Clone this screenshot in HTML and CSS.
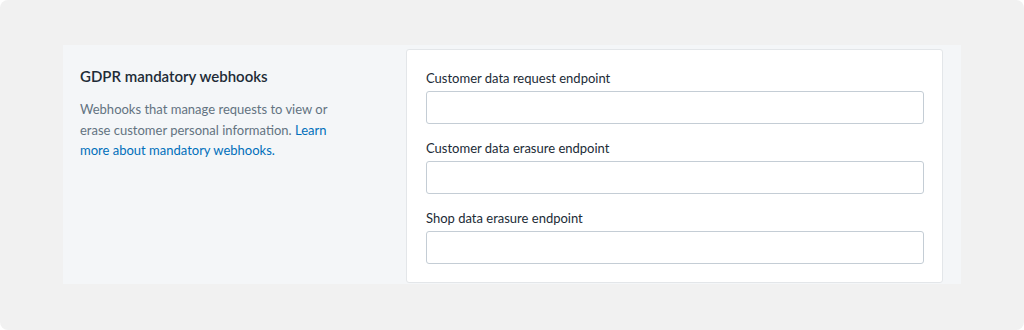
FILE: index.html
```html
<!DOCTYPE html>
<html>
<head>
    <title>App setup</title>
    <link rel="stylesheet" href="styles.css">
</head>
<body>
    <div class="frame">
        <div class="layout">
            <!-- Annotation -->
            <div class="annotation">
                <h2 class="heading">GDPR mandatory webhooks</h2>
                <p class="description">
                    Webhooks that manage requests to view or erase customer personal information.
                    <a href="#">Learn more about mandatory webhooks.</a>
                </p>
            </div>

            <!-- Card with fields -->
            <div class="card">
                <div class="field">
                    <label for="requestEndpoint">Customer data request endpoint</label>
                    <input class="input" type="text" id="requestEndpoint">
                </div>
                <div class="field">
                    <label for="erasureEndpoint">Customer data erasure endpoint</label>
                    <input class="input" type="text" id="erasureEndpoint">
                </div>
                <div class="field">
                    <label for="shopErasureEndpoint">Shop data erasure endpoint</label>
                    <input class="input" type="text" id="shopErasureEndpoint">
                </div>
            </div>
        </div>
    </div>
</body>
</html>
```
FILE: styles.css
```css
body {
    margin: 0;
    padding: 0;
    background-color: #ffffff;
    font-family: Lato, "Noto Sans", sans-serif;
    font-size: 13px;
    color: #212b36;
}

.frame {
    height: 330px;
    box-sizing: border-box;
    padding: 45px 63px 0 63px;
    background-color: #f1f1f1;
    border-radius: 8px;
}

.layout {
    display: flex;
    height: 239px;
    background-color: #f4f6f8;
}

.annotation {
    width: 343px;
    box-sizing: border-box;
    padding: 19px 75px 0 17px;
}

.heading {
    margin: 0 0 11px 0;
    font-size: 15px;
    font-weight: 600;
    line-height: 24px;
}

.description {
    margin: 0;
    color: #637381;
    line-height: 20.5px;
}

.description a {
    color: #006fbb;
    text-decoration: none;
}

.card {
    flex: 1;
    margin: 4px 18px 1px 0;
    padding: 18px 18px 0 19px;
    background-color: #ffffff;
    border: 1px solid #e3e6e9;
    border-radius: 3px;
}

.field {
    margin-bottom: 14px;
}

.field label {
    display: block;
    line-height: 20px;
    margin-bottom: 3px;
}

.input {
    display: block;
    width: 100%;
    height: 33px;
    box-sizing: border-box;
    border: 1px solid #c4cdd5;
    border-radius: 3px;
    background-color: #ffffff;
}
```
